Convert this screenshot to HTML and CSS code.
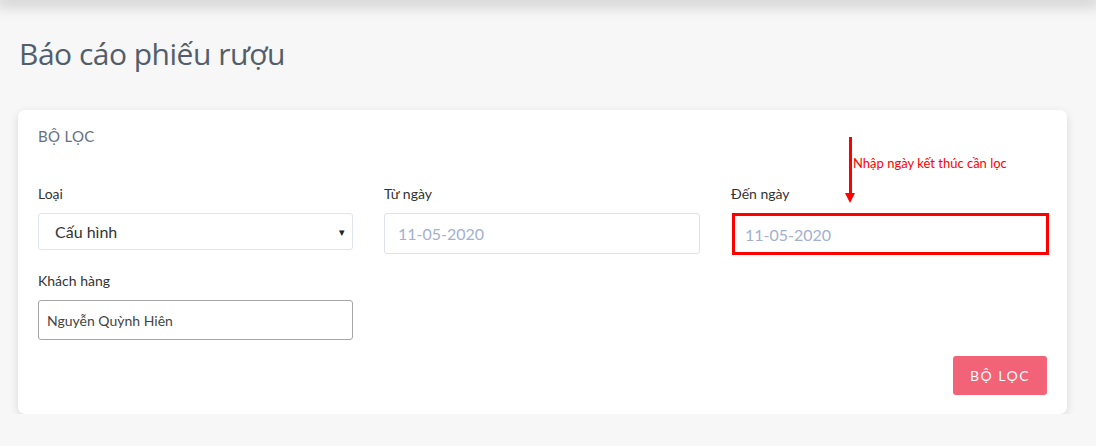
FILE: index.html
```html
<!DOCTYPE html>
<html lang="vi">
<head>
	<meta charset="utf-8">
	<title>Báo cáo phiếu rượu</title>
	<link rel="stylesheet" href="styles.css">
</head>
<body>
	<div class="topbar"></div>
	<div class="page">
		<h1 class="page-title">Báo cáo phiếu rượu</h1>

		<div class="card">
			<div class="card-title">BỘ LỌC</div>

			<div class="filter-grid">
				<div class="field">
					<label>Loại</label>
					<div class="select">
						<span class="select-value">Cấu hình</span>
						<span class="caret">&#9662;</span>
					</div>
				</div>
				<div class="field">
					<label>Từ ngày</label>
					<input class="date-input" type="text" placeholder="11-05-2020">
				</div>
				<div class="field">
					<label>Đến ngày</label>
					<div class="note">
						<span class="note-arrow"></span>
						<span class="note-text">Nhập ngày kết thúc cần lọc</span>
					</div>
					<div class="highlight">
						<input class="date-input" type="text" placeholder="11-05-2020">
					</div>
				</div>
				<div class="field">
					<label>Khách hàng</label>
					<input class="text-input" type="text" value="Nguyễn Quỳnh Hiên">
				</div>
			</div>

			<div class="actions">
				<button class="btn-filter">BỘ LỌC</button>
			</div>
		</div>
	</div>
</body>
</html>
```

FILE: styles.css
```css
* {
	box-sizing: border-box;
}
body {
	margin: 0;
	background-color: #f7f7f7;
	font-family: Lato, "Open Sans", sans-serif;
	color: #3c4550;
	overflow: hidden;
}
.topbar {
	height: 0;
	box-shadow: 0 0 16px 4px rgba(0, 0, 0, 0.28);
}
.page {
	padding: 32px 29px 0 18px;
}
.page-title {
	margin: 0 0 34px 1px;
	font-family: "Open Sans", sans-serif;
	font-weight: 400;
	font-size: 30px;
	letter-spacing: -0.5px;
	line-height: 44px;
	color: #525e6b;
}
.card {
	background-color: white;
	border-radius: 7px;
	box-shadow: 0 3px 10px rgba(0, 0, 0, 0.12);
	padding: 17px 20px 20px 20px;
	height: 304px;
}
.card-title {
	font-size: 15px;
	color: #65717f;
	letter-spacing: 0.3px;
	margin-bottom: 40px;
}
.filter-grid {
	display: grid;
	grid-template-columns: 315px 316px 316px;
	column-gap: 31px;
	row-gap: 17px;
	align-items: start;
}
.field {
	position: relative;
}
.field label {
	display: block;
	font-size: 14px;
	color: #333;
	margin-bottom: 10px;
	line-height: 18px;
}
.select {
	display: flex;
	justify-content: space-between;
	align-items: center;
	height: 37px;
	border: 1px solid #e0e4ec;
	border-radius: 3px;
	padding-right: 7px;
	font-size: 16px;
	color: #333;
}
.select-value {
	margin-left: 16px;
}
.caret {
	font-size: 11px;
	color: #222;
}
.date-input {
	display: block;
	width: 100%;
	height: 41px;
	border: 1px solid #dde3ee;
	border-radius: 3px;
	padding: 0 13px;
	font-family: inherit;
	font-size: 16px;
	background: white;
}
.date-input::placeholder {
	color: #a3b0cf;
}
.highlight {
	border: 3px solid #ff0000;
	margin: 0 -2px 0 1px;
}
.highlight .date-input {
	height: 36px;
	border: none;
	padding-left: 10px;
}
.note {
	position: absolute;
	left: 118px;
	top: -48px;
	display: flex;
	align-items: flex-start;
}
.note-arrow {
	position: relative;
	width: 3px;
	height: 60px;
	background: #ff0000;
}
.note-arrow::after {
	content: "";
	position: absolute;
	left: -4px;
	bottom: -6px;
	border-left: 5.5px solid transparent;
	border-right: 5.5px solid transparent;
	border-top: 10px solid #ff0000;
}
.note-text {
	font-size: 13px;
	color: #ff0000;
	margin: 18px 0 0 1px;
	white-space: nowrap;
}
.text-input {
	display: block;
	width: 100%;
	height: 40px;
	border: 1px solid #a6a6a6;
	border-radius: 3px;
	padding: 0 8px;
	font-family: inherit;
	font-size: 14px;
	color: #444;
}
.actions {
	display: flex;
	justify-content: flex-end;
	margin-top: 16px;
}
.btn-filter {
	width: 94px;
	height: 39px;
	border: none;
	border-radius: 3px;
	background-color: #f26378;
	color: white;
	font-family: inherit;
	font-size: 14px;
	letter-spacing: 1.5px;
}
```
